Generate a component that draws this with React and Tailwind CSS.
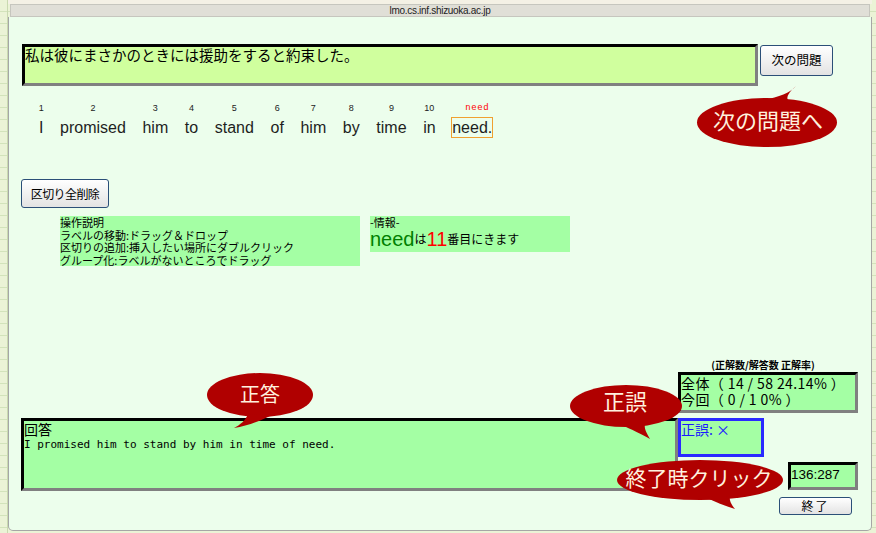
import React from 'react';

const words = [
  { n: '1', w: 'I' },
  { n: '2', w: 'promised' },
  { n: '3', w: 'him' },
  { n: '4', w: 'to' },
  { n: '5', w: 'stand' },
  { n: '6', w: 'of' },
  { n: '7', w: 'him' },
  { n: '8', w: 'by' },
  { n: '9', w: 'time' },
  { n: '10', w: 'in' },
];

const inset =
  'border-[3px] border-t-black border-l-black border-r-[#808080] border-b-[#808080]';

function Word({ n, w }) {
  return (
    <div className="flex flex-col items-center">
      <span className="h-[12px] text-[9px] leading-[12px] text-[#222]">{n}</span>
      <span className="mt-[3px] border border-transparent text-[16px] leading-[19px] text-[#1e1e1e]">
        {w}
      </span>
    </div>
  );
}

function Balloons() {
  return (
    <svg className="pointer-events-none absolute left-0 top-0" width="876" height="533">
      <g fill="#b00000">
        <ellipse cx="767" cy="122.5" rx="70" ry="24.5" />
        <path d="M764 100 C779 97 790 93 796 86 C789 92 786 97 788 100 Z" />
        <ellipse cx="260" cy="395" rx="53" ry="22" />
        <path d="M248 414 C246 420 240 425 234 428 C248 426 262 420 272 415 Z" />
        <ellipse cx="626" cy="406" rx="56" ry="21" />
        <path d="M620 424 C632 430 642 434 650 439 C646 432 644 428 645 424 Z" />
        <ellipse cx="700" cy="480" rx="83" ry="20" />
        <path d="M705 497 C715 502 725 506 735 509 C731 504 729 500 730 496 Z" />
      </g>
      <g fill="#fff1de" fontFamily="'Noto Sans CJK JP', sans-serif" textAnchor="middle">
        <text x="768" y="129" fontSize="22">次の問題へ</text>
        <text x="260" y="402" fontSize="20">正答</text>
        <text x="625" y="410" fontSize="22">正誤</text>
        <text x="699" y="486" fontSize="21">終了時クリック</text>
      </g>
    </svg>
  );
}

export default function App() {
  return (
    <div className="relative flex h-[533px] w-[876px] overflow-hidden bg-[repeating-linear-gradient(180deg,#ebf3d6_0px,#ebf3d6_11px,#d3e3bb_11px,#d3e3bb_12px)] font-['Noto_Sans_CJK_JP',sans-serif] text-black">
      <div className="w-[8px] shrink-0 border-r border-[#c9d9b0]" />
      <div className="flex w-[864px] shrink-0 flex-col pb-[2px]">
        <div className="h-[4px] bg-[#f4f1e5]" />
        <div className="mx-[2px] flex h-[13px] items-center justify-center border border-[#c6c6be] bg-[#e0dfd7] font-['Liberation_Sans',Arial,sans-serif] text-[10px] leading-[11px] tracking-[-0.3px] text-[#222]">
          lmo.cs.inf.shizuoka.ac.jp
        </div>
        <div className="flex flex-1 flex-col rounded-b-[5px] border border-t-0 border-[#a6a6a6] bg-[#ecfeec]">
          <div className="ml-[13px] mt-[27px] flex items-start">
            <div className={`h-[42px] w-[736px] ${inset} bg-[#d0ff9e] text-[14.5px] leading-[16px]`}>
              私は彼にまさかのときには援助をすると約束した。
            </div>
            <button className="ml-[2px] mt-[1px] h-[31px] w-[73px] rounded-[3px] border border-[#2b4f78] bg-linear-to-b from-white to-[#e3e3e3] text-[12.5px]">
              次の問題
            </button>
          </div>

          <div className="ml-[29px] mt-[16px] flex gap-[14.6px] font-['Liberation_Sans',Arial,sans-serif]">
            {words.map((it, i) => (
              <Word key={i} n={it.n} w={it.w} />
            ))}
            <div className="flex flex-col items-center">
              <span className="h-[12px] pl-[10px] font-['Liberation_Mono',monospace] text-[9px] leading-[12px] tracking-[0.6px] text-[#ff0000]">
                need
              </span>
              <span className="mt-[3px] border border-[#f0a030] text-[16px] leading-[19px] text-[#1e1e1e]">
                need.
              </span>
            </div>
          </div>

          <button className="ml-[12px] mt-[41px] h-[29px] w-[88px] self-start rounded-[3px] border border-[#2b4f78] bg-linear-to-b from-white to-[#e3e3e3] text-[12px] tracking-[-0.6px]">
            区切り全削除
          </button>

          <div className="ml-[51px] mt-[8px] flex items-start gap-[10px]">
            <div className="h-[50px] w-[300px] bg-[#a4ffa4] text-[11px] leading-[12.5px]">
              <div>操作説明</div>
              <div>ラベルの移動:ドラッグ＆ドロップ</div>
              <div>区切りの追加:挿入したい場所にダブルクリック</div>
              <div>グループ化:ラベルがないところでドラッグ</div>
            </div>
            <div className="h-[36px] w-[200px] bg-[#a4ffa4] text-[11px] leading-[12px]">
              <div>-情報-</div>
              <div className="flex items-end leading-[22px]">
                <span className="font-['Liberation_Sans',Arial,sans-serif] text-[20px] text-[#008000]">need</span>
                <span className="text-[12px]">は</span>
                <span className="font-['Liberation_Sans',Arial,sans-serif] text-[20px] text-[#ff0000]">11</span>
                <span className="text-[12px]">番目にきます</span>
              </div>
            </div>
          </div>

          <div className="ml-[12px] mt-[93px] flex items-start">
            <div className={`mt-[59px] h-[73px] w-[657px] ${inset} bg-[#a4ffa4]`}>
              <div className="text-[14px] leading-[17px]">回答</div>
              <div className="font-['DejaVu_Sans_Mono',monospace] text-[11px] leading-[14px]">
                I promised him to stand by him in time of need.
              </div>
            </div>
            <div className="flex w-[180px] flex-col">
              <div className="h-[12px] pr-[10px] text-center text-[10px] font-bold leading-[12px]">
                (正解数/解答数 正解率)
              </div>
              <div className={`mt-[1px] h-[41px] ${inset} bg-[#a4ffa4] text-[14px] leading-[16px] tracking-[0.4px]`}>
                <div>全体（ 14 / 58 24.14% ）</div>
                <div>今回（ 0 / 1 0% ）</div>
              </div>
              <div className="mt-[5px] h-[39px] w-[86px] border-[3px] border-[#2a2aff] bg-[#a4ffa4] text-[14px] leading-[16px] text-[#1a1aff]">
                正誤: ×
              </div>
              <div className={`mt-[5px] h-[28px] w-[70px] self-end ${inset} bg-[#a4ffa4] font-['Liberation_Sans',Arial,sans-serif] text-[13.5px] leading-[20px]`}>
                136:287
              </div>
              <button className="mr-[6px] mt-[7px] h-[18px] w-[73px] self-end rounded-[3px] border border-[#2b4f78] bg-linear-to-b from-white to-[#e3e3e3] text-[12px] leading-[14px] tracking-[2px]">
                終了
              </button>
            </div>
          </div>
        </div>
      </div>
      <div className="w-[4px] shrink-0" />
      <Balloons />
    </div>
  );
}
